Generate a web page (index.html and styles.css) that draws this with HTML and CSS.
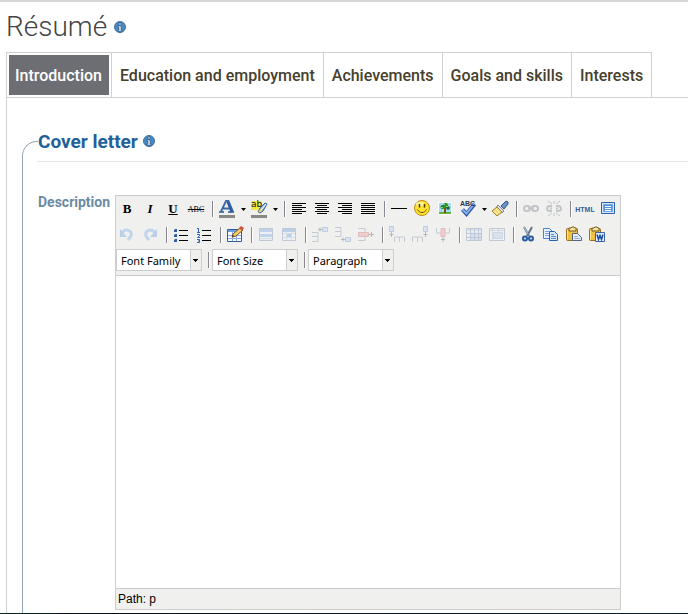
FILE: index.html
```html
<!DOCTYPE html>
<html lang="en">
<head>
<meta charset="utf-8">
<meta name="viewport" content="width=device-width, initial-scale=1">
<title>Résumé</title>
<link rel="stylesheet" href="styles.css">
</head>
<body>
<svg class="defs" aria-hidden="true">
  <symbol id="info" viewBox="0 0 12 12">
    <circle cx="6" cy="6" r="5.500" fill="#4b89c2" stroke="#3a6f9f"/>
    <path d="M5 2h2v2H5zM4 5h3v4h1v1H4V9h1V6H4z" fill="#fff" stroke="#234f78" stroke-width=".6"/>
  </symbol>
  <symbol id="caret" viewBox="0 0 5 3"><path d="M0 0h5L2.500 3z" fill="#000"/></symbol>
</svg>
<header class="page-head">
  <h1>Résumé</h1>
  <a class="help" href="#help" aria-label="Help"><svg><use href="#info"/></svg></a>
</header>
<nav class="tabs" aria-label="Résumé sections">
  <a class="tab active" href="#introduction">Introduction</a>
  <a class="tab" href="#education">Education and employment</a>
  <a class="tab" href="#achievements">Achievements</a>
  <a class="tab" href="#goals">Goals and skills</a>
  <a class="tab" href="#interests">Interests</a>
</nav>
<main class="pane">
  <fieldset>
    <legend><span>Cover letter</span><a class="help" href="#cover-help" aria-label="Help"><svg><use href="#info"/></svg></a></legend>
    <div class="field">
      <label for="description">Description</label>
      <div class="editor">
        <div class="toolbar">
          <div class="row">
            <button type="button" class="glyph bold">B</button>
            <button type="button" class="glyph italic">I</button>
            <button type="button" class="glyph underline">U</button>
            <button type="button" class="glyph strike">ABC</button>
            <i class="sep"></i>
            <button type="button" aria-label="Text color"><svg class="icon" viewBox="0 0 20 20"><path d="M4 12.500L9 2h2.500L16 12.500M6 9.500h7" fill="none" stroke="#3568a5" stroke-width="1.800"/><path d="M10.500 3L14.500 13" stroke="#24549a" stroke-width="2"/><path d="M2 13h5M11 13h6" stroke="#24549a" stroke-width="1.500"/><path d="M2 16h16v3H2z" fill="#888"/></svg></button>
            <button type="button" class="drop" aria-label="Choose text color"><svg><use href="#caret"/></svg></button>
            <button type="button" class="mark" aria-label="Highlight color"><svg class="icon" viewBox="0 0 20 20"><path d="M2 2h11v9H2z" fill="#f3e94a"/><path d="M9 13l2-4 5-5 2 1-4 7-3 2z" fill="#9dbbe0" stroke="#3d6294"/><path d="M12 11l5-6" stroke="#fff"/><path d="M9 14l2-4 2 2z" fill="#f2d34d"/><path d="M2 16h16v3H2z" fill="#888"/></svg><span class="mark-text">ab</span></button>
            <button type="button" class="drop" aria-label="Choose highlight color"><svg><use href="#caret"/></svg></button>
            <i class="sep"></i>
            <button type="button" aria-label="Align left"><svg class="icon" viewBox="0 0 20 20"><path d="M3 4.500h14M3 6.500h10M3 8.500h14M3 10.500h10M3 12.500h14M3 14.500h10" stroke="#000"/></svg></button>
            <button type="button" aria-label="Align center"><svg class="icon" viewBox="0 0 20 20"><path d="M3 4.500h14M5 6.500h10M3 8.500h14M5 10.500h10M3 12.500h14M5 14.500h10" stroke="#000"/></svg></button>
            <button type="button" aria-label="Align right"><svg class="icon" viewBox="0 0 20 20"><path d="M3 4.500h14M7 6.500h10M3 8.500h14M7 10.500h10M3 12.500h14M7 14.500h10" stroke="#000"/></svg></button>
            <button type="button" aria-label="Justify"><svg class="icon" viewBox="0 0 20 20"><path d="M3 4.500h14M3 6.500h14M3 8.500h14M3 10.500h14M3 12.500h14M3 14.500h14" stroke="#000"/></svg></button>
            <i class="sep"></i>
            <button type="button" aria-label="Horizontal rule"><svg class="icon" viewBox="0 0 20 20"><path d="M2 9.500h16" stroke="#000"/></svg></button>
            <button type="button" aria-label="Emoticons"><svg class="icon" viewBox="0 0 20 20"><circle cx="10" cy="9" r="7.500" fill="#ffe32e" stroke="#bd8a10"/><ellipse cx="8" cy="5" rx="4" ry="2" fill="#fff59a"/><path d="M7.500 5v3.500M12.500 5v3.500" stroke="#4b3500" stroke-width="1.500"/><path d="M5.500 10.500c2 4 7 4 9 0" fill="none" stroke="#6c4a00"/></svg></button>
            <button type="button" aria-label="Image"><svg class="icon" viewBox="0 0 20 20"><path d="M3.500 3.500h13v12h-13z" fill="#a5daf3" stroke="#fff"/><path d="M4 13h12v2H4z" fill="#62b531"/><path d="M9 9h2v5H9z" fill="#82501f"/><circle cx="7.500" cy="8" r="2" fill="#218125"/><circle cx="10.500" cy="6.500" r="2.500" fill="#2c912b"/><circle cx="13" cy="9" r="1.800" fill="#176a1e"/><path d="M8 5.500h2M11 7.500h2M6 8.500h2" stroke="#8ad255"/></svg></button>
            <button type="button" class="spell" aria-label="Spell check"><svg class="icon" viewBox="0 0 20 20"><path d="M4.500 10.500l4 4.500 8-10" fill="none" stroke="#2b57a8" stroke-width="4"/><path d="M4.500 10.500l4 4 8-10" fill="none" stroke="#88b1e9" stroke-width="2"/></svg><span class="spell-text">ABC</span></button>
            <button type="button" class="drop" aria-label="Spelling language"><svg><use href="#caret"/></svg></button>
            <button type="button" aria-label="Clean up code"><svg class="icon" viewBox="0 0 20 20"><path d="M11 7l5-5 2 1v2l-4 5z" fill="#6892cb" stroke="#3a5384"/><path d="M8 6l6 6-2 2-6-5z" fill="#dce4ec" stroke="#79818a"/><path d="M7 8l5 5-5 4-5-5z" fill="#f6da73" stroke="#a58232"/><path d="M4 12l4 3M6 10l4 4" stroke="#fff3b1"/></svg></button>
            <i class="sep"></i>
            <button type="button" disabled aria-label="Insert link"><svg class="icon faded" viewBox="0 0 20 20"><g fill="none" stroke="#7f8893" stroke-width="2"><rect x="3" y="7" width="6" height="5" rx="2.500"/><rect x="11" y="7" width="6" height="5" rx="2.500"/><path d="M7 9.500h6"/></g></svg></button>
            <button type="button" disabled aria-label="Remove link"><svg class="icon faded" viewBox="0 0 20 20"><g fill="none" stroke="#7f8893" stroke-width="2"><path d="M8 7H6c-4 0-4 5 0 5h2M12 7h2c4 0 4 5 0 5h-2M6 9.500h2M12 9.500h2"/></g><path d="M4 2l4 3M10 2v3M16 2l-4 3M4 17l4-3M10 14v3M16 17l-4-3" stroke="#7f8893"/></svg></button>
            <i class="sep"></i>
            <button type="button" class="glyph html">HTML</button>
            <button type="button" aria-label="Full screen"><svg class="icon" viewBox="0 0 20 20"><path d="M3.500 3.500h13v11h-13z" fill="#d8e9ff" stroke="#2c61ac"/><path d="M5.500 5.500h9v7h-9z" fill="#5c95df" stroke="#72a4e5"/><path d="M7 7.500h6M7 9.500h6M7 11.500h6" stroke="#fff"/></svg></button>
          </div>
          <div class="row">
            <button type="button" disabled aria-label="Undo"><svg class="icon faded" viewBox="0 0 20 20"><path d="M5 8c3-5 11-3 9 3l-3 4" fill="none" stroke="#7daeea" stroke-width="3"/><path d="M3 4v8h7z" fill="#6f9fdc"/></svg></button>
            <button type="button" disabled aria-label="Redo"><svg class="icon faded" viewBox="0 0 20 20"><path d="M15 8c-3-5-11-3-9 3l3 4" fill="none" stroke="#7daeea" stroke-width="3"/><path d="M17 4v8h-7z" fill="#6f9fdc"/></svg></button>
            <i class="sep"></i>
            <button type="button" aria-label="Bulleted list"><svg class="icon" viewBox="0 0 20 20"><path d="M8 5.500h9M8 10.500h9M8 15.500h9" stroke="#000"/><path d="M3 4h3v3H3zM3 9h3v3H3zM3 14h3v3H3z" fill="#2f5cab"/><path d="M3 4h1v1H3zM3 9h1v1H3zM3 14h1v1H3z" fill="#9bbbe7"/></svg></button>
            <button type="button" aria-label="Numbered list"><svg class="icon" viewBox="0 0 20 20"><path d="M8 5.500h9M8 10.500h9M8 15.500h9" stroke="#000"/><path d="M3 3.500h1.500V7M3 7.500h3M3 9.500h2.500v1.500L3.500 12.500H6M3 14.500h2.500v3H3M4 16h2" fill="none" stroke="#2f63b5"/></svg></button>
            <i class="sep"></i>
            <button type="button" aria-label="Edit table"><svg class="icon" viewBox="0 0 20 20"><path d="M2.500 4.500h14v12h-14z" fill="#fff" stroke="#315c9b"/><path d="M3 5h13v2H3z" fill="#6f9fdd"/><path d="M3 10.500h13M3 13.500h13M7.500 7v9M11.500 7v9" stroke="#88addc"/><path d="M7 12l1-3 7-6 3 2-7 6z" fill="#f5cf6d" stroke="#7b5323"/><path d="M14 3l2-2 3 2-2 3z" fill="#cf4f3c"/><path d="M7 12l1-2 1 1z" fill="#222"/></svg></button>
            <i class="sep"></i>
            <button type="button" disabled aria-label="Row properties"><svg class="icon faded" viewBox="0 0 20 20"><path d="M3.500 3.500h13v12h-13z" fill="#edf3fb" stroke="#7890b2"/><path d="M4 4h12v3H4zM4 9h12v3H4z" fill="#79a8e7"/><path d="M4 13.500h12M8 13v2M12 13v2" stroke="#b5c7df"/></svg></button>
            <button type="button" disabled aria-label="Cell properties"><svg class="icon faded" viewBox="0 0 20 20"><path d="M3.500 3.500h13v12h-13z" fill="#edf3fb" stroke="#7890b2"/><path d="M4 4h12v3H4zM8 9h5v3H8z" fill="#6f9fe2"/><path d="M4 8.500h12M4 12.500h12M7.500 7v8M12.500 7v8" stroke="#b5c7df"/></svg></button>
            <i class="sep"></i>
            <button type="button" disabled aria-label="Insert row before"><svg class="icon faded" viewBox="0 0 20 20"><path d="M2 7.500h6v4H2M2 11.500h6v5H2" fill="#eef2f7" stroke="#8794a5"/><path d="M8 4.500h5M10 2.500v4" stroke="#59636e"/><path d="M12.500 2.500h5v4h-5z" fill="#b9d3f4" stroke="#7296c4"/></svg></button>
            <button type="button" disabled aria-label="Insert row after"><svg class="icon faded" viewBox="0 0 20 20"><path d="M2 2.500h6v4H2M2 6.500h6v5H2" fill="#eef2f7" stroke="#8794a5"/><path d="M8 14.500h5M10 12.500v4" stroke="#59636e"/><path d="M12.500 12.500h5v4h-5z" fill="#b9d3f4" stroke="#7296c4"/></svg></button>
            <button type="button" disabled aria-label="Delete row"><svg class="icon faded" viewBox="0 0 20 20"><path d="M2 3.500h7v4H2M2 11.500h7v4H2" fill="#eef2f7" stroke="#8794a5"/><path d="M2.500 7.500h10v4h-10z" fill="#f29b9b" stroke="#cc7070"/><path d="M13 9.500h5M15.500 7v5" stroke="#59636e"/></svg></button>
            <i class="sep"></i>
            <button type="button" disabled aria-label="Insert column before"><svg class="icon faded" viewBox="0 0 20 20"><path d="M7.500 17v-5h5v5M12.500 12h5v5" fill="#eef2f7" stroke="#8794a5"/><path d="M4.500 7v5M2.500 9.500h4" stroke="#59636e"/><path d="M2.500 1.500h4v5h-4z" fill="#b9d3f4" stroke="#7296c4"/></svg></button>
            <button type="button" disabled aria-label="Insert column after"><svg class="icon faded" viewBox="0 0 20 20"><path d="M2.500 17v-5h5v5M7.500 12h5v5" fill="#eef2f7" stroke="#8794a5"/><path d="M15.500 7v5M13.500 9.500h4" stroke="#59636e"/><path d="M13.500 1.500h4v5h-4z" fill="#b9d3f4" stroke="#7296c4"/></svg></button>
            <button type="button" disabled aria-label="Delete column"><svg class="icon faded" viewBox="0 0 20 20"><path d="M3.500 3v5h4M16.500 3v5h-4" fill="none" stroke="#8794a5"/><path d="M8 3.500h4v8H8z" fill="#f29b9b" stroke="#cc7070"/><path d="M10 12v5M8 14.500h4" stroke="#59636e"/></svg></button>
            <i class="sep"></i>
            <button type="button" disabled aria-label="Split cells"><svg class="icon faded" viewBox="0 0 20 20"><path d="M2.500 3.500h15v12h-15z" fill="#edf3fb" stroke="#7890b2"/><path d="M3 4h14v2H3zM7 9h10v6H7z" fill="#afcbf0"/><path d="M3 8.500h14M3 12.500h14M6.500 4v11M10.500 4v11M14.500 4v11" stroke="#7890b2"/></svg></button>
            <button type="button" disabled aria-label="Merge cells"><svg class="icon faded" viewBox="0 0 20 20"><path d="M2.500 3.500h15v12h-15z" fill="#edf3fb" stroke="#7890b2"/><path d="M6.500 7.500h9v6h-9z" fill="#b7d1f2" stroke="#9bb3d0"/><path d="M3 5.500h14M5.500 4v11M11.500 4v3" stroke="#a7b8cd"/></svg></button>
            <i class="sep"></i>
            <button type="button" aria-label="Cut"><svg class="icon" viewBox="0 0 20 20"><path d="M6 2l5 9M14 2l-5 9" stroke="#5c738c" stroke-width="2"/><path d="M6 2l4 7" stroke="#b9cad9"/><circle cx="7" cy="13.500" r="2" fill="none" stroke="#245ba7" stroke-width="2"/><circle cx="13" cy="13.500" r="2" fill="none" stroke="#245ba7" stroke-width="2"/></svg></button>
            <button type="button" aria-label="Copy"><svg class="icon" viewBox="0 0 20 20"><path d="M2.500 3.500h6l3 3v7h-9z" fill="#e8f2ff" stroke="#4d83ca"/><path d="M4 6.500h4M4 8.500h5M4 10.500h4" stroke="#75a4df"/><path d="M8.500 6.500h5l3 3v6h-8z" fill="#dceaff" stroke="#2d63b7"/><path d="M10 9.500h3M10 11.500h5M10 13.500h5" stroke="#5387cf"/></svg></button>
            <button type="button" aria-label="Paste"><svg class="icon" viewBox="0 0 20 20"><rect x="2.500" y="3.500" width="11" height="12" rx="1" fill="#efc044" stroke="#9c6c16"/><path d="M5 6V3h2l1-1h2l1 1h1v3z" fill="#f6e3a1" stroke="#725924"/><path d="M3.500 5v9" stroke="#ffeb92"/><path d="M8.500 8.500h5l4 4v3h-9z" fill="#e6f0ff" stroke="#51647d"/><path d="M10 11.500h4M10 13.500h6" stroke="#94aac9"/></svg></button>
            <button type="button" aria-label="Paste from Word"><svg class="icon" viewBox="0 0 20 20"><rect x="2.500" y="3.500" width="11" height="12" rx="1" fill="#efc044" stroke="#9c6c16"/><path d="M5 6V3h2l1-1h2l1 1h1v3z" fill="#f6e3a1" stroke="#725924"/><path d="M3.500 5v9" stroke="#ffeb92"/><path d="M8.500 7.500h9v9h-9z" fill="#e6f0ff" stroke="#3865a8"/><path d="M10 9.500l1.500 5 1.500-4 1.500 4 1.500-5" fill="none" stroke="#174c9b" stroke-width="1.500"/></svg></button>
          </div>
          <div class="row selects">
            <select aria-label="Font family"><option>Font Family</option></select>
            <i class="sep"></i>
            <select aria-label="Font size"><option>Font Size</option></select>
            <i class="sep"></i>
            <select aria-label="Format"><option>Paragraph</option></select>
          </div>
        </div>
        <textarea id="description"></textarea>
        <div class="status">Path: p</div>
      </div>
    </div>
  </fieldset>
</main>
<footer></footer>
</body>
</html>
```
FILE: styles.css
```css
* { box-sizing: border-box; }

body {
  margin: 0;
  min-height: 100vh;
  display: flex;
  flex-direction: column;
  border-top: 2px solid #d5d5d5;
  background: #fff;
  font-family: Roboto, "Liberation Sans", sans-serif;
  overflow-x: hidden;
}

.defs { display: none; }

.page-head {
  display: flex;
  align-items: center;
  gap: 7px;
  height: 50px;
  padding-left: 6px;
}

h1 {
  margin: 0;
  font-size: 28px;
  font-weight: 300;
  line-height: 48px;
  color: #444;
}

.help { display: block; width: 12px; height: 12px; }
.help svg { display: block; width: 12px; height: 12px; }

.tabs {
  display: flex;
  margin-left: 6px;
  border-left: 1px solid #d1d1d1;
  border-bottom: 1px solid #d1d1d1;
}

.tab {
  padding: 0 8px;
  height: 45px;
  border-top: 1px solid #d1d1d1;
  border-right: 1px solid #d1d1d1;
  font-size: 16px;
  font-weight: 500;
  line-height: 45px;
  white-space: nowrap;
  color: #46402c;
  text-decoration: none;
}

.tab.active {
  padding-right: 9px;
  color: #fff;
  background: #6d6e73;
  background-clip: padding-box;
  box-shadow: inset 0 0 0 2px #fff;
}

.pane {
  flex: 1;
  display: flex;
  margin-left: 6px;
  padding: 23px 0 0 15px;
  border-left: 1px solid #d1d1d1;
}

fieldset {
  flex: 1;
  min-width: 0;
  margin: 0;
  padding: 0 0 3px 15px;
  border: 1px solid #8fa5b8;
  border-width: 1px 0 0 1px;
  border-top-left-radius: 15px;
}

legend {
  display: flex;
  align-items: center;
  gap: 5px;
  width: 100%;
  height: 41px;
  padding: 0;
  border-bottom: 1px solid #e3e3e3;
  font-size: 19px;
  font-weight: 700;
  color: #22609a;
}

.field {
  display: flex;
  align-items: flex-start;
  gap: 5px;
  padding-top: 33px;
}

.field label {
  width: 72px;
  line-height: 14px;
  font-size: 14px;
  font-weight: 700;
  color: #6c8aa4;
}

.editor {
  width: 506px;
  border: 1px solid #ccc;
}

.toolbar {
  height: 80px;
  background: #f0f0ee;
  border-bottom: 1px solid #ccc;
}

.row {
  display: flex;
  align-items: center;
  height: 26px;
}

.row button {
  flex: none;
  width: 22px;
  height: 22px;
  margin: 0 1px 0 0;
  padding: 0;
  border: 0;
  background: none;
  display: flex;
  align-items: center;
  justify-content: center;
}

.row .drop { width: 8px; }
.drop svg { width: 5px; height: 3px; }

.icon { flex: none; width: 20px; height: 20px; }
.faded { opacity: .4; }

.sep {
  flex: none;
  width: 2px;
  height: 16px;
  margin: 0 2px 0 4px;
  border-left: 1px solid #8a8590;
  background: #fff;
}

.row .glyph {
  font: 700 13px "Liberation Serif", serif;
  color: #000;
}

.row .italic { font-style: italic; }
.row .underline { text-decoration: underline; }
.row .strike { font-size: 8px; font-weight: 400; text-decoration: line-through; }
.row .html { font: 700 7px "Liberation Sans", sans-serif; color: #315fa0; }

.mark, .spell { position: relative; }

.mark-text, .spell-text {
  position: absolute;
  top: 2px;
  left: 3px;
  font: 9px/9px "DejaVu Sans", sans-serif;
  color: #111;
}

.spell-text {
  top: 1px;
  font: 700 7px/9px "Liberation Sans", sans-serif;
  color: #28384f;
}

.row.selects { height: 24px; }
.selects .sep { margin: 0 2px 0 6px; }

select {
  appearance: none;
  width: 86px;
  height: 22px;
  margin: 0;
  padding: 0 0 0 4px;
  border: 1px solid #ccc;
  border-radius: 0;
  background:
    linear-gradient(#000, #000) right 3px top 9px / 5px 1px no-repeat,
    linear-gradient(#000, #000) right 4px top 10px / 3px 1px no-repeat,
    linear-gradient(#000, #000) right 5px top 11px / 1px 1px no-repeat,
    linear-gradient(#ccc, #ccc) right 10px top / 1px 100% no-repeat,
    linear-gradient(#f0f0ee, #f0f0ee) right / 10px 100% no-repeat,
    #fff;
  font: 11px "Noto Sans", sans-serif;
  color: #000;
}

textarea {
  display: block;
  width: 100%;
  height: 312px;
  margin: 0;
  padding: 8px;
  border: 0;
  resize: none;
  background: #fff;
}

.status {
  height: 21px;
  padding-left: 2px;
  border-top: 1px solid #ccc;
  background: #f0f0ee;
  font: 12px/20px "Liberation Sans", sans-serif;
  color: #000;
}

footer {
  height: 2px;
  background: linear-gradient(90deg, #06291f 50px, #080c18 60px, #0b2035);
}
```
